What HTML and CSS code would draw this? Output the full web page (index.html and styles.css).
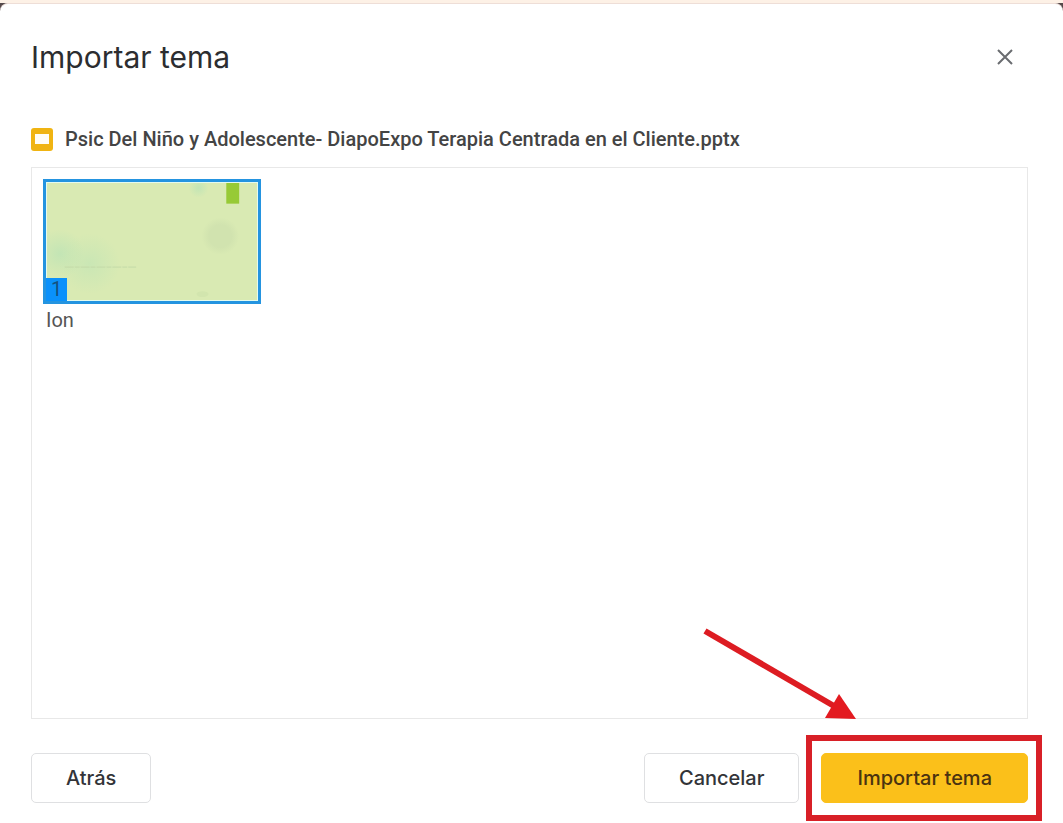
FILE: index.html
```html
<!DOCTYPE html>
<html lang="es">
<head>
    <meta charset="UTF-8">
    <meta name="viewport" content="width=device-width, initial-scale=1.0">
    <title>Importar tema</title>
    <link rel="stylesheet" href="styles.css">
</head>
<body>
    <div class="dialog" role="dialog" aria-labelledby="dialogTitle">
        <div class="dialog-header">
            <h1 id="dialogTitle">Importar tema</h1>
            <button class="close-button" type="button" aria-label="Cerrar">
                <svg width="16" height="16" viewBox="0 0 16 16" fill="none" stroke="#6a6c70" stroke-width="2">
                    <path d="M1 1L15 15M15 1L1 15"/>
                </svg>
            </button>
        </div>

        <div class="file-row">
            <svg class="file-icon" width="22" height="23" viewBox="0 0 22 23">
                <rect width="22" height="23" rx="3" fill="#f0b412"/>
                <rect x="4" y="6" width="14" height="10" fill="#fffdf5"/>
            </svg>
            <h2>Psic Del Niño y Adolescente- DiapoExpo Terapia Centrada en el Cliente.pptx</h2>
        </div>

        <div class="theme-list">
            <button class="theme" type="button">
                <span class="thumbnail">
                    <svg class="slide" viewBox="0 0 212 119" preserveAspectRatio="none">
                        <defs>
                            <radialGradient id="mint">
                                <stop offset="0" stop-color="#c3e5b5"/>
                                <stop offset="1" stop-color="#c3e5b5" stop-opacity="0"/>
                            </radialGradient>
                            <radialGradient id="olive">
                                <stop offset="0.6" stop-color="#d1e3af"/>
                                <stop offset="1" stop-color="#d1e3af" stop-opacity="0"/>
                            </radialGradient>
                        </defs>
                        <rect width="212" height="119" fill="#d9eab3"/>
                        <circle cx="13" cy="72" r="25" fill="url(#mint)"/>
                        <circle cx="43" cy="82" r="31" fill="url(#mint)" opacity="0.7"/>
                        <circle cx="153" cy="5" r="10" fill="url(#mint)"/>
                        <circle cx="175" cy="54" r="19" fill="url(#olive)"/>
                        <ellipse cx="157" cy="113" rx="6" ry="3" fill="#d2e5ae"/>
                        <path d="M18 85.5H90" stroke="#c3d9a8" stroke-dasharray="9 1 5 1"/>
                        <rect x="181" width="13" height="21" fill="#97ca36"/>
                    </svg>
                    <span class="theme-number">1</span>
                </span>
                <span class="theme-name">Ion</span>
            </button>
        </div>

        <div class="dialog-footer">
            <button class="button" type="button">Atrás</button>
            <div class="footer-right">
                <button class="button" type="button">Cancelar</button>
                <div class="highlight">
                    <button class="button primary" type="button">Importar tema</button>
                    <svg class="arrow" width="160" height="100" viewBox="0 0 160 100">
                        <path d="M5 6L134 81" stroke="#dd1c22" stroke-width="6"/>
                        <path d="M156 94L125 93L139 69Z" fill="#e31a20"/>
                    </svg>
                </div>
            </div>
        </div>
    </div>
</body>
</html>
```
FILE: styles.css
```css
* {
    margin: 0;
    padding: 0;
    box-sizing: border-box;
}

body {
    display: flex;
    flex-direction: column;
    min-height: 100vh;
    font-family: Roboto, sans-serif;
    background: #55494b;
    border-top: 3px solid #fdf1e6;
}

button {
    font: inherit;
    border: none;
    background: none;
    cursor: pointer;
}

.dialog {
    flex: 1;
    display: flex;
    flex-direction: column;
    padding: 31px 35px 20px 31px;
    background: #fff;
    border-top: 1px solid #eeded7;
    border-radius: 8px 8px 0 0;
}

.dialog-header {
    display: flex;
    justify-content: space-between;
    align-items: center;
    height: 44px;
}

h1 {
    font-family: Inter, sans-serif;
    font-size: 30px;
    font-weight: 400;
    color: #2c2d30;
}

.close-button {
    display: flex;
    align-items: center;
    justify-content: center;
    width: 46px;
    height: 46px;
}

.file-row {
    display: flex;
    align-items: center;
    gap: 12px;
    margin-top: 48px;
    height: 24px;
}

h2 {
    font-size: 20px;
    font-weight: 500;
    color: #444;
}

.theme-list {
    flex: 1;
    margin-top: 16px;
    padding: 11px;
    border: 1px solid #e8e8e8;
}

.theme {
    width: 218px;
    text-align: left;
}

.thumbnail {
    display: block;
    position: relative;
    height: 125px;
    padding: 1px;
    border: 3px solid #2494e0;
    background: #e4fbef;
}

.slide {
    display: block;
    width: 100%;
    height: 100%;
}

.theme-number {
    position: absolute;
    left: 0;
    bottom: 0;
    width: 21px;
    height: 23px;
    background: #0a91fb;
    color: #15517f;
    font-size: 20px;
    line-height: 23px;
    text-align: center;
}

.theme-name {
    display: block;
    padding: 4px 3px;
    font-size: 20px;
    line-height: 24px;
    color: #555;
}

.dialog-footer {
    display: flex;
    justify-content: space-between;
    margin-top: 34px;
}

.footer-right {
    display: flex;
    gap: 22px;
}

.button {
    height: 50px;
    padding: 0 34px;
    border: 1px solid #dfe0e2;
    border-radius: 5px;
    font-family: Inter, sans-serif;
    font-size: 20px;
    font-weight: 500;
    color: #333438;
}

.primary {
    padding: 0 35px;
    border-color: #fbc01a;
    background: #fbc01a;
    color: #4b3310;
}

.highlight {
    position: relative;
}

/* red frame around the import button */
.highlight::after {
    content: "";
    position: absolute;
    inset: -18px -14px -18px -15px;
    border: 6px solid #d82027;
    pointer-events: none;
}

.arrow {
    position: absolute;
    right: 168px;
    bottom: 78px;
    pointer-events: none;
}
```
